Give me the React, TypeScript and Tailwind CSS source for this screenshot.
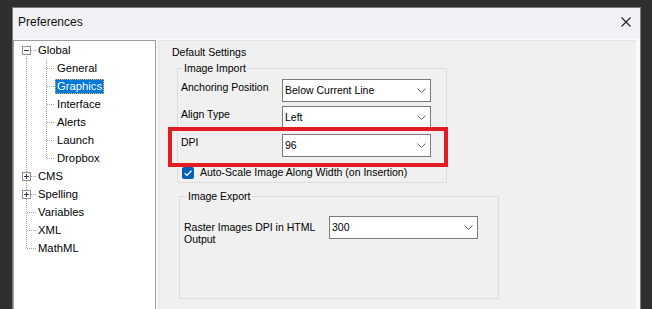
import React from 'react'

type Node = {
  label: string
  level: 0 | 1
  box?: 'minus' | 'plus'
  first?: boolean
  last?: boolean
  lastChild?: boolean
  selected?: boolean
}

const tree: Node[] = [
  { label: 'Global', level: 0, box: 'minus', first: true },
  { label: 'General', level: 1 },
  { label: 'Graphics', level: 1, selected: true },
  { label: 'Interface', level: 1 },
  { label: 'Alerts', level: 1 },
  { label: 'Launch', level: 1 },
  { label: 'Dropbox', level: 1, lastChild: true },
  { label: 'CMS', level: 0, box: 'plus' },
  { label: 'Spelling', level: 0, box: 'plus' },
  { label: 'Variables', level: 0 },
  { label: 'XML', level: 0 },
  { label: 'MathML', level: 0, last: true },
]

const dot = { stroke: '#a0a0a0', strokeWidth: 1, strokeDasharray: '1 1', fill: 'none' }

function RootCell({ node }: { node: Node }) {
  const y1 = node.first ? 9 : 0
  const y2 = node.last ? 10 : 18
  return (
    <svg width="22" height="18" viewBox="0 0 22 18" className="shrink-0" shapeRendering="crispEdges">
      <path d={`M12.5 ${y1} V${y2}`} {...dot} />
      {node.level === 0 && <path d="M13 9.5 H22" {...dot} />}
      {node.box && (
        <g>
          <rect x="8.5" y="5.5" width="8" height="8" fill="#fdfdfd" stroke="#8e8f8f" />
          <path d="M10 9.5 H15" stroke="#2b3f5c" />
          {node.box === 'plus' && <path d="M12.5 7 V12" stroke="#2b3f5c" />}
        </g>
      )}
    </svg>
  )
}

function ChildCell({ node }: { node: Node }) {
  const y2 = node.lastChild ? 10 : 18
  return (
    <svg width="19" height="18" viewBox="0 0 19 18" className="shrink-0" shapeRendering="crispEdges">
      <path d={`M10.5 0 V${y2}`} {...dot} />
      <path d="M11 9.5 H19" {...dot} />
    </svg>
  )
}

function TreeRow({ node }: { node: Node }) {
  return (
    <div className="flex h-[18px] items-center">
      <RootCell node={node} />
      {node.level === 1 && <ChildCell node={node} />}
      <span
        className={
          node.selected
            ? 'h-[15px] border border-dotted border-[#f0b860] bg-[#0078d7] px-[1px] leading-[13px] text-white'
            : 'h-[15px] border border-transparent px-[1px] leading-[13px] text-black'
        }
      >
        {node.label}
      </span>
    </div>
  )
}

function Chevron() {
  return (
    <svg width="9" height="5" viewBox="0 0 9 5" className="shrink-0">
      <path d="M0.5 0.5 L4.5 4.5 L8.5 0.5" fill="none" stroke="#5f5f5f" strokeWidth="1" />
    </svg>
  )
}

function Select({ value }: { value: string }) {
  return (
    <div className="flex h-[23px] w-[149px] shrink-0 items-center justify-between border border-[#7a7a7a] bg-white pl-[2px] pr-[4px]">
      <span>{value}</span>
      <Chevron />
    </div>
  )
}

function Checkbox() {
  return (
    <svg width="12" height="12" viewBox="0 0 12 12" className="shrink-0">
      <rect x="0" y="0" width="12" height="12" rx="2" fill="#005fb8" />
      <path d="M2.7 6.2 L5 8.4 L9.4 3.8" fill="none" stroke="white" strokeWidth="1.3" />
    </svg>
  )
}

export default function App() {
  return (
    <div className="h-[309px] w-[652px] overflow-hidden bg-[#2f2f2f] pl-[12px] pt-[7px] font-['Liberation_Sans',Arial,sans-serif]">
      <div className="flex h-[320px] w-[629px] flex-col border border-[#7c7c7c] bg-[#fafafa]">
        <div className="flex h-[31px] shrink-0 items-center justify-between bg-[#f2f2f6] pb-[3px] pl-[5px] pr-[9px]">
          <span className="text-[12px] leading-[14px] text-[#111]">Preferences</span>
          <svg width="10" height="10" viewBox="0 0 10 10">
            <path d="M0.5 0.5 L9.5 9.5 M9.5 0.5 L0.5 9.5" stroke="#1c1c1c" strokeWidth="1.1" />
          </svg>
        </div>

        <div className="flex flex-1 pt-[1px]">
          <div className="w-[143px] shrink-0 border border-[#9c9c9c] bg-white text-[11.25px]">
            {tree.map((n) => (
              <TreeRow key={n.label} node={n} />
            ))}
          </div>

          <div className="relative ml-[2px] w-[478px] shrink-0 border-l border-t border-[#e4e4e4] bg-[#f0f0f0] text-[10.5px] leading-[13px] text-black">
            <div className="ml-[13px] mt-[5px]">Default Settings</div>

            <div className="ml-[18px] mt-[9px] h-[115px] w-[270px] border border-[#dcdcdc]">
              <div className="-mt-[7px] ml-[5px] w-fit bg-[#f0f0f0] px-[1px]">Image Import</div>
              <div className="mt-[4px] flex">
                <div className="ml-[3px] w-[101px] pt-[2px]">Anchoring Position</div>
                <Select value="Below Current Line" />
              </div>
              <div className="mt-[4px] flex">
                <div className="ml-[3px] w-[101px] pt-[2px]">Align Type</div>
                <Select value="Left" />
              </div>
              <div className="mt-[5px] flex">
                <div className="ml-[3px] w-[101px] pt-[2px]">DPI</div>
                <Select value="96" />
              </div>
              <div className="ml-[4px] mt-[9px] flex items-center gap-[6px]">
                <Checkbox />
                <span>Auto-Scale Image Along Width (on Insertion)</span>
              </div>
            </div>

            <div className="ml-[20px] mt-[13px] h-[103px] w-[320px] border border-[#dcdcdc]">
              <div className="-mt-[7px] ml-[7px] w-fit bg-[#f0f0f0] px-[1px]">Image Export</div>
              <div className="mt-[13px] flex">
                <div className="ml-[4px] w-[145px] pr-[6px] pt-[5px] leading-[12px]">
                  Raster Images DPI in HTML Output
                </div>
                <Select value="300" />
              </div>
            </div>

            <div className="absolute left-[9px] top-[86px] h-[40px] w-[280px] border-4 border-[#e31b23]" />
          </div>
        </div>
      </div>
    </div>
  )
}
